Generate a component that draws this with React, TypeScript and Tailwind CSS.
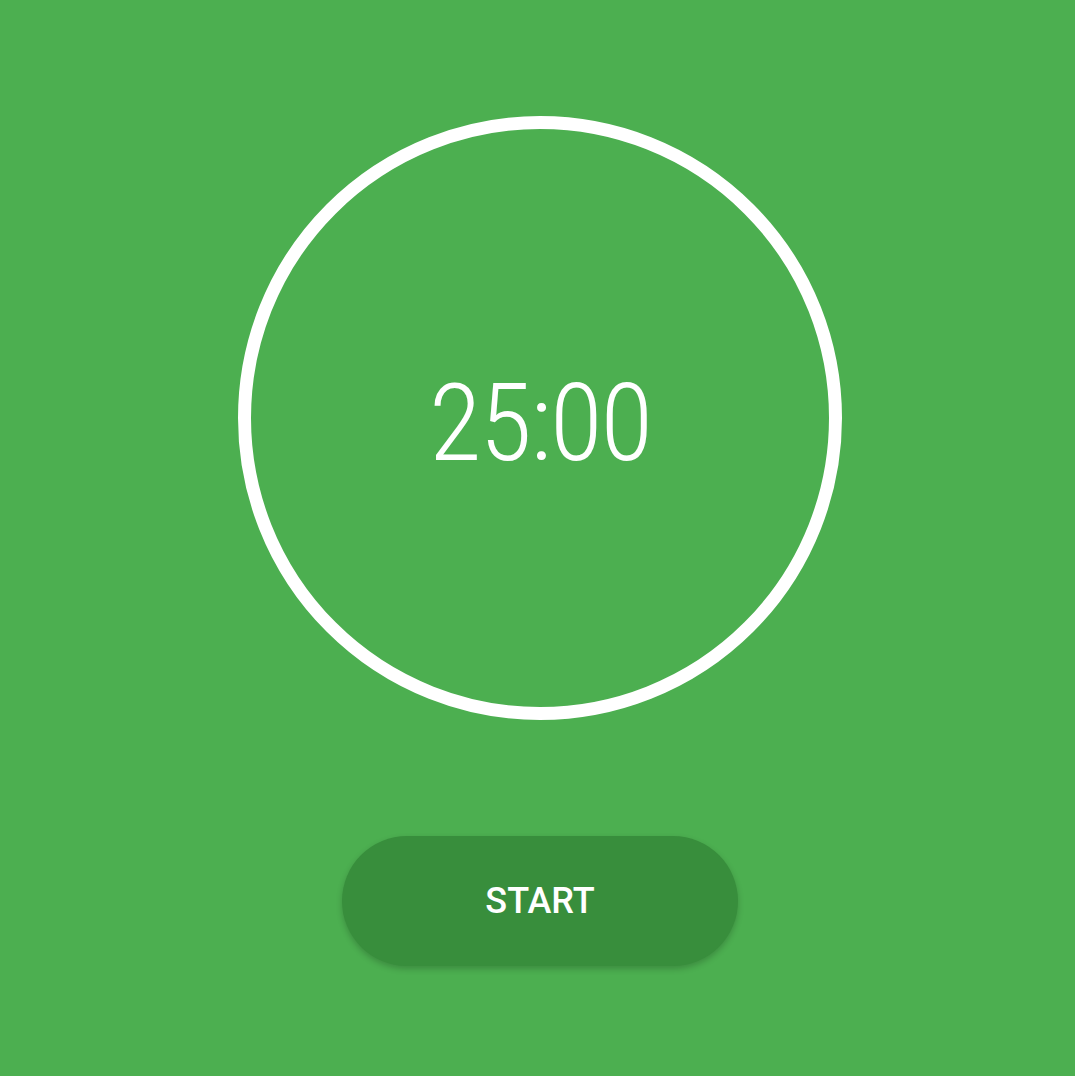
export default function App() {
  return (
    <div className="min-h-[1076px] w-full overflow-hidden bg-[#4caf50] font-['Roboto',sans-serif]">
      <div className="flex w-[1080px] flex-col items-center pt-[116px]">
        {/* timer ring */}
        <div className="flex h-[604px] w-[604px] items-center justify-center rounded-full border-[13px] border-white">
          <span className="mt-[10px] text-[108px] font-light leading-none tracking-[-2px] text-white font-stretch-semi-condensed">
            25:00
          </span>
        </div>

        <button className="mt-[116px] flex h-[130px] w-[396px] items-center justify-center rounded-full bg-[#388e3c] text-[36px] font-medium text-white shadow-[0_3px_6px_rgba(0,0,0,0.2)]">
          START
        </button>
      </div>
    </div>
  );
}
